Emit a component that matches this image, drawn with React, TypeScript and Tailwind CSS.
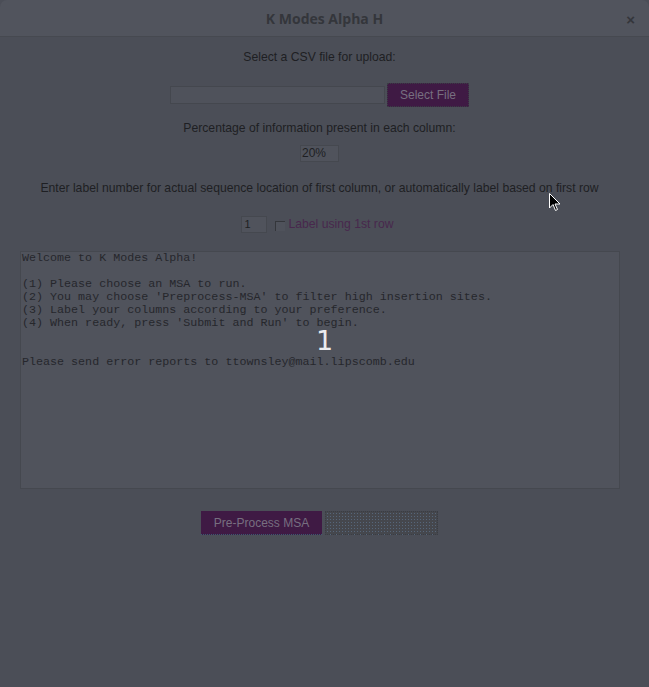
import React from "react";

const lines = [
  "Welcome to K Modes Alpha!",
  "",
  "(1) Please choose an MSA to run.",
  "(2) You may choose 'Preprocess-MSA' to filter high insertion sites.",
  "(3) Label your columns according to your preference.",
  "(4) When ready, press 'Submit and Run' to begin.",
  "",
  "",
  "Please send error reports to ttownsley@mail.lipscomb.edu",
];

export default function App() {
  return (
    <div className="relative w-[649px] h-[687px] bg-[#4b4e57] overflow-hidden font-['Liberation_Sans',Arial,sans-serif] text-[12.2px] text-[#1e1f23]">
      {/* title bar */}
      <div className="relative h-[37px] bg-[#51545d] rounded-t-[7px] border-b border-[#464950] flex items-center justify-center">
        <span className="font-['Open_Sans',sans-serif] font-bold text-[14px] text-[#34363b]">K Modes Alpha H</span>
        <span className="absolute right-[14px] top-[9px] text-[15px] font-bold text-[#34363b]">×</span>
      </div>

      <div className="w-[639px] flex flex-col items-center">
        <div className="mt-[13px] leading-[14px]">Select a CSV file for upload:</div>

        <div className="mt-[19px] flex items-center">
          <div className="w-[215px] h-[18px] bg-[#4f525b] border border-[#44474e]" />
          <div className="ml-[2px] w-[82px] h-[24px] bg-[#3f1a44] border border-dotted border-[#3a3d44] flex items-center justify-center text-[#776f80] text-[12px]">
            Select File
          </div>
        </div>

        <div className="mt-[14px] leading-[14px]">Percentage of information present in each column:</div>

        <div className="mt-[10px] w-[39px] h-[17px] bg-[#50535c] border border-[#45484f] pl-[1px] text-[12px] leading-[15px] text-left self-center">
          20%
        </div>

        <div className="mt-[19px] leading-[14px]">
          Enter label number for actual sequence location of first column, or automatically label based on first row
        </div>

        <div className="mt-[20px] flex items-center pr-[4px]">
          <div className="w-[26px] h-[17px] bg-[#50535c] border border-[#45484f] pl-[2px] text-[11px] leading-[15px]">1</div>
          <div className="ml-[8px] mt-[3px] w-[10px] h-[10px] bg-[#4f525b] border-l border-t border-[#34363b]" />
          <span className="ml-[3px] text-[#48284d] text-[12.2px]">Label using 1st row</span>
        </div>
      </div>

      {/* console */}
      <div className="relative ml-[20px] mt-[18px] w-[600px] h-[238px] bg-[#50535c] border border-[#45484f] px-[1px] font-['Liberation_Mono','Courier_New',monospace] text-[11.7px] leading-[13px] text-[#26272c] whitespace-pre">
        {lines.map((l, i) => (
          <div key={i} className="h-[13px]">{l}</div>
        ))}
        <span className="absolute left-[295px] top-[75px] font-['DejaVu_Sans',sans-serif] text-[27px] leading-[28px] text-[#ececee]">1</span>
      </div>

      <div className="w-[639px] mt-[22px] flex justify-center">
        <div className="w-[121px] h-[24px] bg-[#3f1a44] border-b border-dotted border-[#3a5a70] flex items-center justify-center text-[#776f80] text-[12px]">
          Pre-Process MSA
        </div>
        <div className="ml-[3px] w-[113px] h-[24px] bg-[#45474d] border border-dotted border-[#3a3d44] bg-[radial-gradient(#56667a_0.6px,transparent_0.7px)] bg-[length:3px_3px]" />
      </div>

      {/* mouse pointer */}
      <svg className="absolute left-[549px] top-[193px]" width="12" height="19" viewBox="0 0 12 19">
        <path d="M0.5 0.5 L0.5 15 L4 11.5 L6.5 17.5 L8.5 16.5 L6 11 L11 11 Z" fill="#000" stroke="#fff" strokeWidth="1" />
      </svg>
    </div>
  );
}
